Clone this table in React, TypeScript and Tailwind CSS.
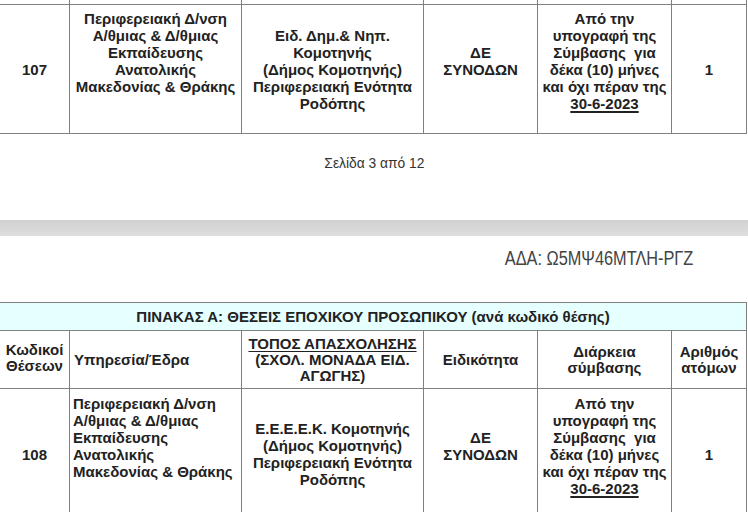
import React from 'react';

const cols = 'grid grid-cols-[71px_172px_182px_114px_134px_75px] -ml-px w-[748px]';
const cell = 'border-r border-b border-[#808080] flex flex-col justify-center items-center text-center';

function Lines({ lines }: { lines: React.ReactNode[] }) {
  return (
    <>
      {lines.map((l, i) => (
        <span key={i} className="block whitespace-nowrap">
          {l}
        </span>
      ))}
    </>
  );
}

const dates = [
  'Από την',
  'υπογραφή της',
  'Σύμβασης\u00a0 για',
  'δέκα (10) μήνες',
  'και όχι πέραν της',
  <span className="underline underline-offset-2 decoration-[1.5px]">30-6-2023</span>,
];

const region = [
  'Περιφερειακή Δ/νση',
  'Α/θμιας & Δ/θμιας',
  'Εκπαίδευσης',
  'Ανατολικής',
  'Μακεδονίας & Θράκης',
];

interface RowProps {
  code: string;
  school: string[];
  leftRegion?: boolean;
  height: string;
}

function DataRow({ code, school, leftRegion, height }: RowProps) {
  return (
    <>
      <div className={`${cell} border-l ${height}`}>{code}</div>
      <div
        className={`border-r border-b border-[#808080] flex flex-col justify-center pb-[34px] ${
          leftRegion ? 'items-start text-left pl-[3px]' : 'items-center text-center'
        } ${height}`}
      >
        <Lines lines={region} />
      </div>
      <div className={`${cell} ${height}`}>
        <Lines lines={school} />
      </div>
      <div className={`${cell} pb-[17px] ${height}`}>
        <Lines lines={['ΔΕ', 'ΣΥΝΟΔΩΝ']} />
      </div>
      <div className={`${cell} pb-[17px] ${height}`}>
        <Lines lines={dates} />
      </div>
      <div className={`${cell} ${height}`}>1</div>
    </>
  );
}

export default function App() {
  return (
    <div className="w-[748px] h-[512px] overflow-hidden bg-white text-[#222] font-['Liberation_Sans',Arial,sans-serif]">
      {/* end of page 3 */}
      <div className={`${cols} text-[15px] leading-[17px] font-bold`}>
        <div className="border-l border-r border-b border-[#808080] h-[5px]" />
        <div className="border-r border-b border-[#808080] h-[5px]" />
        <div className="border-r border-b border-[#808080] h-[5px]" />
        <div className="border-r border-b border-[#808080] h-[5px]" />
        <div className="border-r border-b border-[#808080] h-[5px]" />
        <div className="border-r border-b border-[#808080] h-[5px]" />
        <DataRow
          code="107"
          height="h-[129px]"
          school={['Ειδ. Δημ.& Νηπ.', 'Κομοτηνής', '(Δήμος Κομοτηνής)', 'Περιφερειακή Ενότητα', 'Ροδόπης']}
        />
      </div>

      <div className="h-[86px] pt-[21px] text-center text-[15px] leading-[16px] text-[#333]">
        <span className="inline-block scale-x-[0.92] origin-center">Σελίδα 3 από 12</span>
      </div>

      <div className="h-[16px] bg-linear-to-b from-[#d1d1d1] to-[#dedede]" />

      {/* page 4 */}
      <div className="h-[66px] pt-[12px] pr-[55px] text-right text-[20px] leading-[20px] text-[#444]">
        <span className="inline-block scale-x-[0.815] origin-right">ΑΔΑ: Ω5ΜΨ46ΜΤΛΗ-ΡΓΖ</span>
      </div>

      <div className={`${cols} text-[15px] leading-[17px] font-bold`}>
        <div className="col-span-6 h-[29px] border border-[#808080] bg-[#e6ffff] flex items-center justify-center">
          ΠΙΝΑΚΑΣ Α: ΘΕΣΕΙΣ ΕΠΟΧΙΚΟΥ ΠΡΟΣΩΠΙΚΟΥ (ανά κωδικό θέσης)
        </div>

        <div className={`${cell} border-l h-[58px] leading-[16px] pb-[4px]`}>
          <Lines lines={['Κωδικοί', 'Θέσεων']} />
        </div>
        <div className="border-r border-b border-[#808080] h-[58px] flex items-center pl-[4px]">
          Υπηρεσία/Έδρα
        </div>
        <div className={`${cell} h-[58px] leading-[16px]`}>
          <Lines
            lines={[
              <span className="underline underline-offset-2">ΤΟΠΟΣ ΑΠΑΣΧΟΛΗΣΗΣ</span>,
              '(ΣΧΟΛ. ΜΟΝΑΔΑ ΕΙΔ.',
              'ΑΓΩΓΗΣ)',
            ]}
          />
        </div>
        <div className={`${cell} h-[58px]`}>Ειδικότητα</div>
        <div className={`${cell} h-[58px] leading-[16px]`}>
          <Lines lines={['Διάρκεια', 'σύμβασης']} />
        </div>
        <div className={`${cell} h-[58px] leading-[16px]`}>
          <Lines lines={['Αριθμός', 'ατόμων']} />
        </div>

        <DataRow
          code="108"
          leftRegion
          height="h-[131px]"
          school={['Ε.Ε.Ε.Ε.Κ. Κομοτηνής', '(Δήμος Κομοτηνής)', 'Περιφερειακή Ενότητα', 'Ροδόπης']}
        />
      </div>
    </div>
  );
}
